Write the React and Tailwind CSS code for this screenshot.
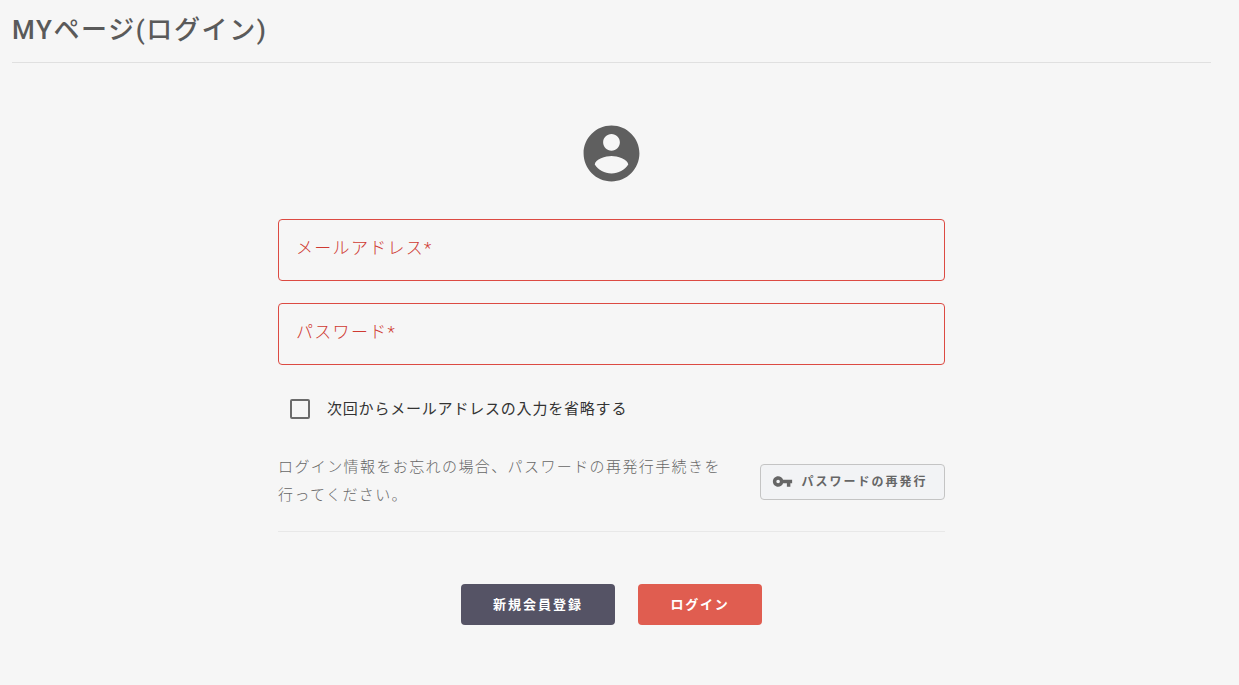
import React from 'react';

const FONT = 'font-["Roboto","Noto_Sans_CJK_JP",sans-serif]';

const TextField = ({ label }) => (
    <div className="w-full h-[62px] rounded border border-[#dc4a42] flex items-center px-[17px] pb-[3px] text-[17px] tracking-[1.3px] font-light text-[#cf3a32]">
        {label}
    </div>
);

const App = () => {
    return (
        <div className={`min-h-[685px] bg-[#f6f6f6] pl-3 pr-[28px] ${FONT}`}>
            <header className="h-[63px] border-b border-[#e0e0e0] pt-[11px]">
                <h1 className="text-[26px] leading-[38px] font-medium tracking-[1.6px] text-[#5a5a5a]">MYページ(ログイン)</h1>
            </header>

            <main className="w-[667px] mx-auto flex flex-col items-center">
                <svg className="mt-[57px] w-[67px] h-[67px] fill-[#5f5f5f]" viewBox="0 0 24 24">
                    <path d="M12 2C6.48 2 2 6.48 2 12s4.48 10 10 10 10-4.48 10-10S17.52 2 12 2zm0 3c1.66 0 3 1.34 3 3s-1.34 3-3 3-3-1.34-3-3 1.34-3 3-3zm0 14.2c-2.5 0-4.71-1.28-6-3.22.03-1.99 4-3.08 6-3.08 1.99 0 5.97 1.09 6 3.08-1.29 1.94-3.5 3.22-6 3.22z" />
                </svg>

                <div className="w-full mt-[32px] flex flex-col gap-[22px]">
                    <TextField label="メールアドレス*" />
                    <TextField label="パスワード*" />
                </div>

                <label className="w-full mt-[32px] pl-[12px] flex items-center gap-[17px] text-[15px] leading-[24px] tracking-[0.8px] text-[#333333]">
                    <span className="w-[20px] h-[20px] rounded-[2px] border-2 border-[#6b6b6b]"></span>
                    次回からメールアドレスの入力を省略する
                </label>

                <div className="w-full mt-[32px] pb-[22px] border-b border-[#e8e8e8] flex items-center justify-between">
                    <p className="w-[445px] text-[15px] leading-[28px] tracking-[1.4px] font-light text-[#666666]">
                        ログイン情報をお忘れの場合、パスワードの再発行手続きを行ってください。
                    </p>
                    <button className="w-[185px] h-[36px] mt-[1px] pr-[5px] rounded border border-[#c4c4c4] bg-[#f2f3f5] flex items-center justify-center gap-2 text-[12px] font-bold tracking-[2px] text-[#666666]">
                        <svg className="w-[21px] h-[21px] fill-[#666666]" viewBox="0 0 24 24">
                            <path d="M12.65 10C11.83 7.67 9.61 6 7 6c-3.31 0-6 2.69-6 6s2.69 6 6 6c2.61 0 4.83-1.67 5.65-4H17v4h4v-4h2v-4H12.65zM7 14c-1.1 0-2-.9-2-2s.9-2 2-2 2 .9 2 2-.9 2-2 2z" />
                        </svg>
                        パスワードの再発行
                    </button>
                </div>

                <div className="mt-[52px] flex gap-[23px]">
                    <button className="w-[154px] h-[41px] rounded bg-[#555365] text-[13px] font-bold tracking-[2px] text-white">
                        新規会員登録
                    </button>
                    <button className="w-[124px] h-[41px] rounded bg-[#e05d50] text-[13px] font-bold tracking-[1.8px] text-white">
                        ログイン
                    </button>
                </div>
            </main>
        </div>
    );
};

export default App;
